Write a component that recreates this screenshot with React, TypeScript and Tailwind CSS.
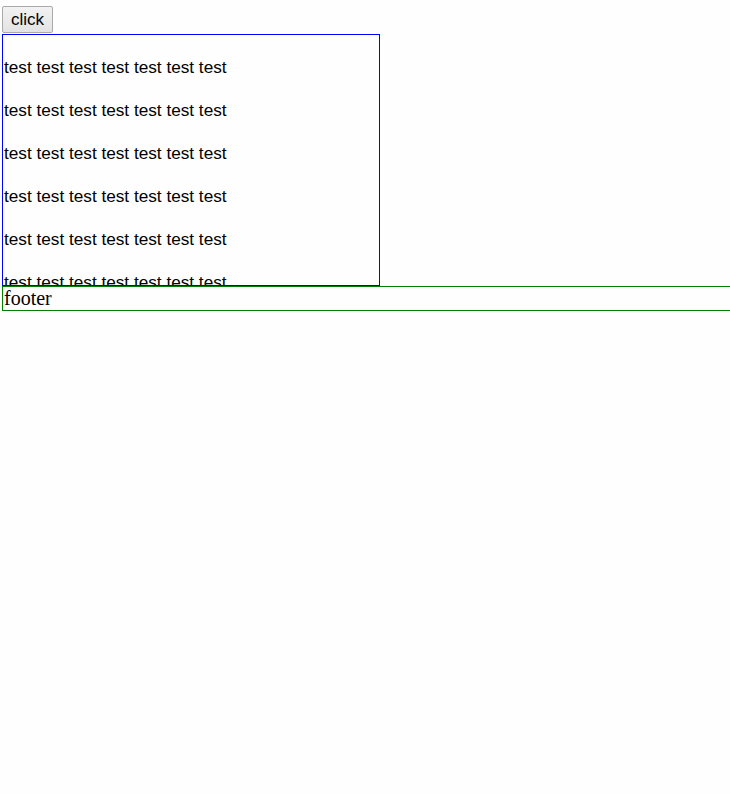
import React from "react";

const lines = Array.from({ length: 6 }, () => "test test test test test test test");

const App: React.FC = () => {
  return (
    <div className="min-h-[794px] w-full overflow-hidden bg-[#fefefe] pl-[2px] pt-[6px] text-black">
      <button
        type="button"
        className="flex h-[27px] w-[51px] items-center justify-center rounded-[2px] border border-[#a9a9a9] bg-gradient-to-b from-[#f2f2f2] to-[#e3e3e3] font-['Liberation_Sans',Arial,sans-serif] text-[17px] leading-none"
      >
        click
      </button>

      {/* scrolling box */}
      <div className="mt-px h-[252px] w-[378px] overflow-hidden border border-[#0000ff]">
        <div className="flex flex-col gap-[19px] pl-px pt-[20px] font-['Liberation_Sans',Arial,sans-serif] text-[17.2px] leading-[24px]">
          {lines.map((line, i) => (
            <p key={i} className="whitespace-nowrap">
              {line}
            </p>
          ))}
        </div>
      </div>

      <div className="h-[25px] w-screen border border-[#008000] pl-px font-['Liberation_Serif','Times_New_Roman',serif] text-[20px] leading-[23px]">
        footer
      </div>
    </div>
  );
};

export default App;
